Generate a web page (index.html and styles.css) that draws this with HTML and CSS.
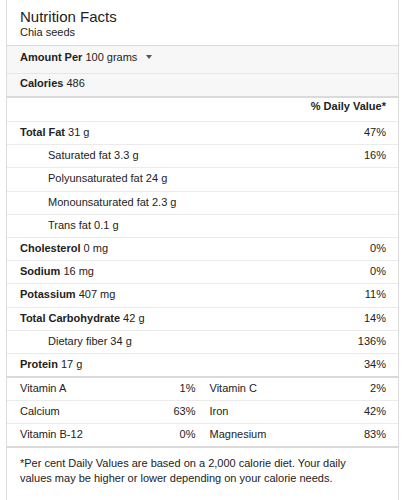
FILE: index.html
```html
<!DOCTYPE html>
<html>
<head>
<meta charset="utf-8">
<link rel="stylesheet" href="styles.css">
</head>
<body>
<div class="card">
  <div class="header">
    <div class="title">Nutrition Facts</div>
    <div class="subtitle">Chia seeds</div>
  </div>
  <div class="amount"><b>Amount Per</b> 100 grams<span class="caret"></span></div>
  <div class="calories"><b>Calories</b> 486</div>
  <div class="dvhead"><b>% Daily Value*</b></div>
  <div class="row"><span><b>Total Fat</b> 31 g</span><span>47%</span></div>
  <div class="row sub"><span>Saturated fat 3.3 g</span><span>16%</span></div>
  <div class="row sub"><span>Polyunsaturated fat 24 g</span><span></span></div>
  <div class="row sub"><span>Monounsaturated fat 2.3 g</span><span></span></div>
  <div class="row sub"><span>Trans fat 0.1 g</span><span></span></div>
  <div class="row"><span><b>Cholesterol</b> 0 mg</span><span>0%</span></div>
  <div class="row"><span><b>Sodium</b> 16 mg</span><span>0%</span></div>
  <div class="row"><span><b>Potassium</b> 407 mg</span><span>11%</span></div>
  <div class="row"><span><b>Total Carbohydrate</b> 42 g</span><span>14%</span></div>
  <div class="row sub"><span>Dietary fiber 34 g</span><span>136%</span></div>
  <div class="row last"><span><b>Protein</b> 17 g</span><span>34%</span></div>
  <div class="vitamins">
    <div class="vrow">
      <div class="vcell left"><span>Vitamin A</span><span>1%</span></div>
      <div class="vcell right"><span>Vitamin C</span><span>2%</span></div>
    </div>
    <div class="vrow">
      <div class="vcell left"><span>Calcium</span><span>63%</span></div>
      <div class="vcell right"><span>Iron</span><span>42%</span></div>
    </div>
    <div class="vrow vlast">
      <div class="vcell left"><span>Vitamin B-12</span><span>0%</span></div>
      <div class="vcell right"><span>Magnesium</span><span>83%</span></div>
    </div>
  </div>
  <div class="foot">*Per cent Daily Values are based on a 2,000 calorie diet. Your daily values may be higher or lower depending on your calorie needs.</div>
</div>
</body>
</html>
```

FILE: styles.css
```css
html, body {
  margin: 0;
  padding: 0;
  background: #fff;
}
body {
  font-family: "Liberation Sans", Arial, sans-serif;
  font-size: 11px;
  line-height: 13px;
  color: #222;
}
b {
  font-weight: bold;
}
.card {
  margin-left: 6px;
  width: 391px;
  min-height: 500px;
  border-left: 1px solid #dcdcdc;
  border-right: 1px solid #dcdcdc;
}
.header {
  padding: 8px 12px 6px 13px;
  border-bottom: 1px solid #dadada;
}
.title {
  font-size: 15px;
  line-height: 17px;
}
.subtitle {
  margin-top: 1px;
}
.amount {
  background: #f7f7f7;
  padding: 5px 12px 9px 13px;
  border-bottom: 1px solid #e6e6e6;
}
.caret {
  display: inline-block;
  width: 0;
  height: 0;
  margin-left: 9px;
  vertical-align: 2px;
  border-left: 3px solid transparent;
  border-right: 3px solid transparent;
  border-top: 4px solid #555;
}
.calories {
  background: #f7f7f7;
  padding: 3px 12px 6px 13px;
  border-bottom: 2px solid #dadada;
}
.dvhead {
  padding: 2px 12px 8px 13px;
  text-align: right;
  border-bottom: 1px solid #ebebeb;
}
.row {
  display: flex;
  justify-content: space-between;
  padding: 4px 12px 5.2px 13px;
  border-bottom: 1px solid #ebebeb;
}
.row.sub {
  padding-left: 41px;
}
.row.last {
  border-bottom: 2px solid #dadada;
}
.vrow {
  display: grid;
  grid-template-columns: 1fr 1fr;
  border-bottom: 1px solid #ebebeb;
}
.vrow.vlast {
  border-bottom: 2px solid #dadada;
}
.vcell {
  display: flex;
  justify-content: space-between;
  padding: 4px 0 5px 0;
}
.vcell.left {
  padding-left: 13px;
  padding-right: 7px;
}
.vcell.right {
  padding-left: 7px;
  padding-right: 12px;
}
.foot {
  padding: 8px 40px 10px 13px;
  line-height: 15px;
}
```
